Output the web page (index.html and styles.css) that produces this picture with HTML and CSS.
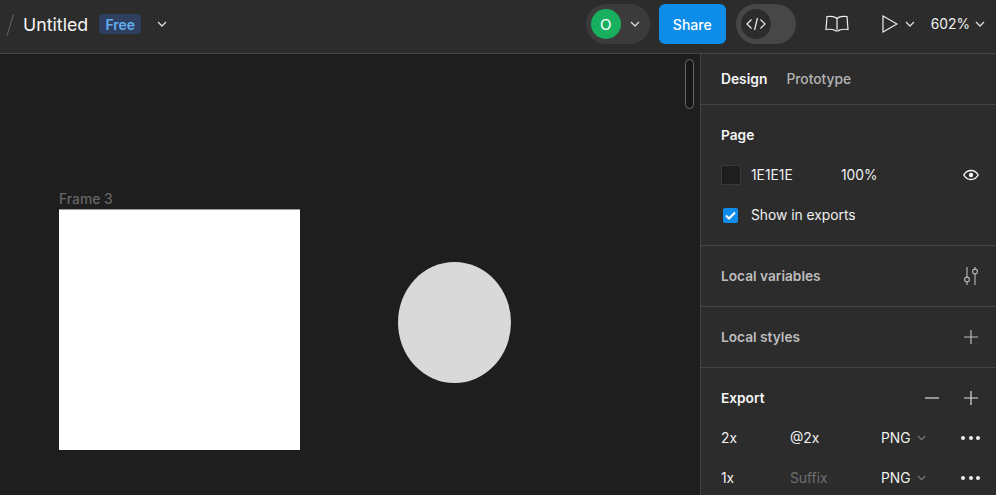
FILE: index.html
```html
<!DOCTYPE html>
<html lang="en">
<head>
<meta charset="utf-8">
<title>Untitled</title>
<link rel="stylesheet" href="styles.css">
</head>
<body>
<div class="app">
  <header class="topbar">
    <div class="left">
      <svg class="slash" width="8" height="22" viewBox="0 0 8 22"><path d="M7.5 .5 1 21.5" stroke="#666" fill="none"/></svg>
      <span class="title">Untitled</span>
      <span class="badge">Free</span>
      <svg class="chev chev-title" width="10" height="6" viewBox="0 0 10 6"><path d="M1 1l4 4 4-4"/></svg>
    </div>
    <div class="right">
      <div class="user-pill">
        <span class="avatar">O</span>
        <svg class="chev" width="10" height="6" viewBox="0 0 10 6"><path d="M1 1l4 4 4-4"/></svg>
      </div>
      <button class="share">Share</button>
      <div class="dev-toggle">
        <span class="dev-knob">
          <svg width="20" height="14" viewBox="0 0 20 14" fill="none" stroke="#eee" stroke-width="1.2"><path d="M5.5 2.5 1 7l4.5 4.5M14.5 2.5 19 7l-4.500 4.500M11.500 1 8.500 13"/></svg>
        </span>
      </div>
      <svg class="book" width="24" height="18" viewBox="0 0 24 18" fill="none" stroke="#eee" stroke-width="1.2"><path d="M12 3.500C10 1.500 6 1 2 1.500L1 14.500c4-.5 8-.5 10 1.500h2c2-2 6-2 10-1.500l-1-13c-4-.5-8 0-10 2zM12 3.500V15"/></svg>
      <svg class="play" width="16" height="18" viewBox="0 0 16 18" fill="none" stroke="#eee" stroke-width="1.200"><path d="M1 1v16l14-8z"/></svg>
      <svg class="chev chev-play" width="10" height="6" viewBox="0 0 10 6"><path d="M1 1l4 4 4-4"/></svg>
      <span class="zoom">602%</span>
      <svg class="chev chev-zoom" width="10" height="6" viewBox="0 0 10 6"><path d="M1 1l4 4 4-4"/></svg>
    </div>
  </header>
  <div class="main">
    <section class="canvas">
      <span class="frame-label">Frame 3</span>
      <div class="frame"></div>
      <div class="ellipse"></div>
      <div class="scrollbar"></div>
    </section>
    <aside class="panel">
      <nav class="tabs">
        <span class="tab active">Design</span>
        <span class="tab">Prototype</span>
      </nav>
      <section class="sec sec-page">
        <h2 class="head">Page</h2>
        <div class="fill-row">
          <span class="swatch"></span>
          <span class="hex">1E1E1E</span>
          <span class="pct">100%</span>
          <svg class="eye" width="16" height="12" viewBox="0 0 16 12" fill="none" stroke="#f5f5f5" stroke-width="1.400"><path d="M.8 6C2.500 3 5 1.500 8 1.500S13.500 3 15.200 6C13.500 9 11 10.500 8 10.500S2.500 9 .8 6z"/><circle cx="8" cy="6" r="2.200" fill="#f5f5f5" stroke="none"/></svg>
        </div>
        <label class="check-row">
          <span class="check"><svg width="11" height="9" viewBox="0 0 11 9" fill="none" stroke="#fff" stroke-width="2"><path d="M1 4.500l3 3 6-6"/></svg></span>
          <span>Show in exports</span>
        </label>
      </section>
      <section class="sec sec-bar">
        <h2 class="head dim">Local variables</h2>
        <svg class="sliders" width="16" height="20" viewBox="0 0 16 20" fill="none" stroke="#bbb" stroke-width="1.100"><path d="M4 1v10M4 16v3M12 1v2M12 8v11"/><circle cx="4" cy="13.500" r="2.400"/><circle cx="12" cy="5.500" r="2.400"/></svg>
      </section>
      <section class="sec sec-bar">
        <h2 class="head dim">Local styles</h2>
        <svg class="plus" width="14" height="14" viewBox="0 0 14 14" stroke="#bbb" stroke-width="1.200"><path d="M7 0v14M0 7h14"/></svg>
      </section>
      <section class="sec sec-export">
        <div class="export-head">
          <h2 class="head">Export</h2>
          <div class="export-actions">
            <svg width="14" height="14" viewBox="0 0 14 14" stroke="#ddd" stroke-width="1.200"><path d="M0 7h14"/></svg>
            <svg width="14" height="14" viewBox="0 0 14 14" stroke="#ddd" stroke-width="1.200"><path d="M7 0v14M0 7h14"/></svg>
          </div>
        </div>
        <div class="export-row">
          <span>2x</span>
          <span>@2x</span>
          <span class="fmt">PNG<svg class="chev-dim" width="9" height="6" viewBox="0 0 9 6"><path d="M.8 1l3.700 3.700L8.200 1"/></svg></span>
          <span class="dots"><i></i><i></i><i></i></span>
        </div>
        <div class="export-row">
          <span>1x</span>
          <span class="placeholder">Suffix</span>
          <span class="fmt">PNG<svg class="chev-dim" width="9" height="6" viewBox="0 0 9 6"><path d="M.8 1l3.700 3.700L8.200 1"/></svg></span>
          <span class="dots"><i></i><i></i><i></i></span>
        </div>
      </section>
    </aside>
  </div>
</div>
</body>
</html>
```
FILE: styles.css
```css
* { box-sizing: border-box; }
html, body { margin: 0; padding: 0; }
body { background: #1e1e1e; font-family: Inter, "Liberation Sans", sans-serif; color: #f0f0f0; overflow: hidden; }
.app { width: 996px; height: 495px; display: flex; flex-direction: column; overflow: hidden; }

.topbar { height: 54px; flex: none; background: #2c2c2c; border-bottom: 1px solid #444; display: flex; justify-content: space-between; align-items: center; padding: 0 11px 5px 6px; }
.left, .right { display: flex; align-items: center; }
.slash { margin-right: 9px; margin-top: 1px; }
.title { font-size: 17.800px; color: #f5f5f5; }
.badge { margin-left: 11px; width: 42px; height: 20px; border-radius: 4px; background: #2f3f5f; color: #62aef0; font-size: 14px; font-weight: 600; display: flex; align-items: center; justify-content: center; }
.chev { fill: none; stroke: #ddd; stroke-width: 1.300; flex: none; }
.chev-title { margin-left: 16px; }

.user-pill { width: 64px; height: 40px; border-radius: 20px; background: #3b3b3b; display: flex; align-items: center; padding-left: 5px; gap: 9px; }
.avatar { width: 30px; height: 30px; border-radius: 50%; background: #18b05f; color: #fff; font-size: 15px; display: flex; align-items: center; justify-content: center; }
.share { margin-left: 9px; width: 67px; height: 40px; border: 0; border-radius: 6px; background: #0d8ce9; color: #fff; font: 500 14px Inter, sans-serif; padding: 0; }
.dev-toggle { margin-left: 10px; width: 60px; height: 40px; border-radius: 20px; background: #474747; padding: 5px; }
.dev-knob { width: 30px; height: 30px; border-radius: 50%; background: #2c2c2c; display: flex; align-items: center; justify-content: center; }
.book { margin-left: 29px; }
.play { margin-left: 33px; }
.chev-play { margin-left: 7px; }
.zoom { margin-left: 16px; font-size: 13.800px; color: #f0f0f0; }
.chev-zoom { margin-left: 5px; }

.main { flex: 1; display: flex; min-height: 0; }
.canvas { flex: 1; position: relative; background: #1e1e1e; }
.frame-label { position: absolute; left: 59px; top: 137px; font-size: 13.800px; font-weight: 500; color: #666; }
.frame { position: absolute; left: 59px; top: 155px; width: 241px; height: 241px; background: #fff; border-top: 1px solid #999; }
.ellipse { position: absolute; left: 398px; top: 208px; width: 113px; height: 121px; border-radius: 50%; background: #d9d9d9; }
.scrollbar { position: absolute; left: 685px; top: 5px; width: 9px; height: 50px; border-radius: 5px; background: #171717; border: 1.500px solid #666; }

.panel { width: 296px; flex: none; background: #2c2c2c; border-left: 1px solid #444; display: flex; flex-direction: column; }
.tabs { height: 51px; flex: none; border-bottom: 1px solid #444; display: flex; align-items: center; padding: 0 20px; gap: 19px; font-size: 13.800px; }
.tab { color: #b4b4b4; font-weight: 500; }
.tab.active { color: #f5f5f5; font-weight: 600; }
.sec { border-bottom: 1px solid #444; padding: 0 20px; flex: none; font-size: 13.800px; }
.head { margin: 0; font-size: 13.700px; font-weight: 600; color: #f5f5f5; line-height: 20px; }
.head.dim { color: #bdbdbd; }
.sec-page { height: 141px; padding-top: 20px; }
.fill-row { display: flex; align-items: center; margin-top: 20px; height: 20px; }
.swatch { width: 20px; height: 20px; background: #1e1e1e; border: 1px solid #383838; }
.hex { margin-left: 10px; width: 90px; }
.pct { flex: 1; }
.eye { margin-right: -3px; }
.check-row { display: flex; align-items: center; margin-top: 20px; margin-left: 2px; height: 20px; gap: 13px; }
.check { width: 15px; height: 15px; border-radius: 2px; background: #0d8ce9; display: flex; align-items: center; justify-content: center; }
.sec-bar { height: 61px; display: flex; align-items: center; justify-content: space-between; }
.sec-bar .plus { margin-right: -2px; }
.sec-bar .sliders { margin-right: -3px; }
.sec-export { padding-top: 20px; border-bottom: 0; padding-right: 16px; }
.export-head { display: flex; justify-content: space-between; align-items: center; height: 20px; }
.export-actions { display: flex; gap: 25px; margin-right: 2px; }
.export-row { display: grid; grid-template-columns: 69px 91px 1fr auto; align-items: center; height: 20px; margin-top: 20px; color: #f0f0f0; line-height: 20px; }
.placeholder { color: #6f6f6f; }
.fmt { display: flex; align-items: center; gap: 6px; }
.chev-dim { fill: none; stroke: #777; stroke-width: 1.200; }
.dots { display: flex; gap: 3.500px; }
.dots i { width: 4px; height: 4px; border-radius: 50%; background: #eee; }
```
